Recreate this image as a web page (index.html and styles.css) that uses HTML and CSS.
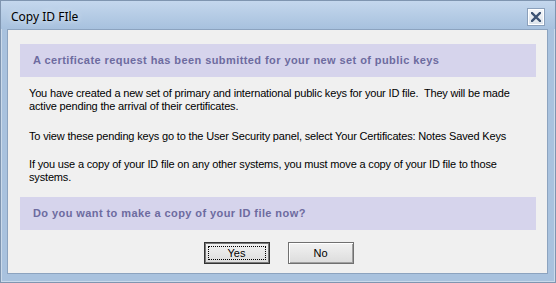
FILE: index.html
```html
<!DOCTYPE html>
<html lang="en">
<head>
  <meta charset="UTF-8">
  <meta name="viewport" content="width=device-width, initial-scale=1.0">
  <title>Copy ID FIle</title>
  <link rel="stylesheet" href="styles.css">
</head>
<body>
  <div class="window">
    <div class="titlebar">
      <span class="title">Copy ID FIle</span>
      <button class="close" aria-label="Close">
        <svg width="10" height="10" viewBox="0 0 10 10">
          <path d="M1 1 L9 9 M9 1 L1 9" stroke="#3d5374" stroke-width="2.4" stroke-linecap="square" fill="none"/>
        </svg>
      </button>
    </div>
    <div class="client">
      <div class="band">A certificate request has been submitted for your new set of public keys</div>
      <p class="text first">You have created a new set of primary and international public keys for your ID file.&nbsp; They will be made<br>active pending the arrival of their certificates.</p>
      <p class="text second">To view these pending keys go to the User Security panel, select Your Certificates: Notes Saved Keys</p>
      <p class="text">If you use a copy of your ID file on any other systems, you must move a copy of your ID file to those<br>systems.</p>
      <div class="band question">Do you want to make a copy of your ID file now?</div>
      <div class="buttons">
        <button class="btn default">Yes</button>
        <button class="btn">No</button>
      </div>
    </div>
  </div>
</body>
</html>
```

FILE: styles.css
```css
body {
  margin: 0;
  background: #fff;
}

.window {
  width: 556px;
  height: 283px;
  box-sizing: border-box;
  border: 1px solid #7f95b0;
  box-shadow: inset 0 0 0 1px #cbdaea;
  background: #a9c2de;
  padding: 0 7px 8px 6px;
  display: flex;
  flex-direction: column;
}

.titlebar {
  height: 28px;
  margin: 0 -7px 0 -6px;
  padding: 7px 10px 0 10px;
  box-sizing: border-box;
  display: flex;
  justify-content: space-between;
  align-items: flex-start;
  background: linear-gradient(#c4d7ed, #a7c1de);
}

.title {
  font-family: "Noto Sans", "DejaVu Sans", sans-serif;
  font-size: 12px;
  line-height: 18px;
  color: #000;
  text-shadow: 0 0 6px rgba(255, 255, 255, 0.8);
}

.close {
  width: 18px;
  height: 18px;
  padding: 0;
  border: 1px solid #8ba0bb;
  box-shadow: inset 0 0 0 1px #fff;
  background: linear-gradient(#f5f7fa, #dce3eb);
  display: flex;
  align-items: center;
  justify-content: center;
}

.client {
  flex: 1;
  border: 1px solid #8ca3bf;
  background: #f0f0f0;
  padding: 14px 11px 0 12px;
  display: flex;
  flex-direction: column;
  font-family: "Liberation Sans", Arial, sans-serif;
  font-size: 11px;
}

.band {
  height: 33px;
  line-height: 33px;
  background: #d6d4ec;
  color: #6d6b9f;
  font-weight: bold;
  font-size: 11px;
  letter-spacing: 0.42px;
  padding-left: 13px;
}

.text {
  margin: 15px 0 0 9px;
  line-height: 13px;
  letter-spacing: -0.17px;
  color: #000;
}

.text.first {
  margin-top: 10px;
}

.text.second {
  margin-top: 17px;
}

.question {
  margin-top: 13px;
}

.buttons {
  display: flex;
  justify-content: center;
  gap: 18px;
  margin-top: 12px;
  padding-left: 1px;
}

.btn {
  width: 66px;
  height: 22px;
  box-sizing: border-box;
  padding: 0;
  font-family: "Liberation Sans", Arial, sans-serif;
  font-size: 11px;
  color: #000;
  border: 1px solid #707070;
  box-shadow: inset 1px 1px 0 #fff, inset -1px -1px 0 #a0a0a0;
  background: linear-gradient(#f2f2f2, #dcdcdc);
  position: relative;
}

.btn.default {
  border-color: #333;
  box-shadow: inset 0 0 0 1px #7a7a7a;
}

.btn.default::after {
  content: "";
  position: absolute;
  inset: 3px;
  border: 1px dotted #000;
}
```
